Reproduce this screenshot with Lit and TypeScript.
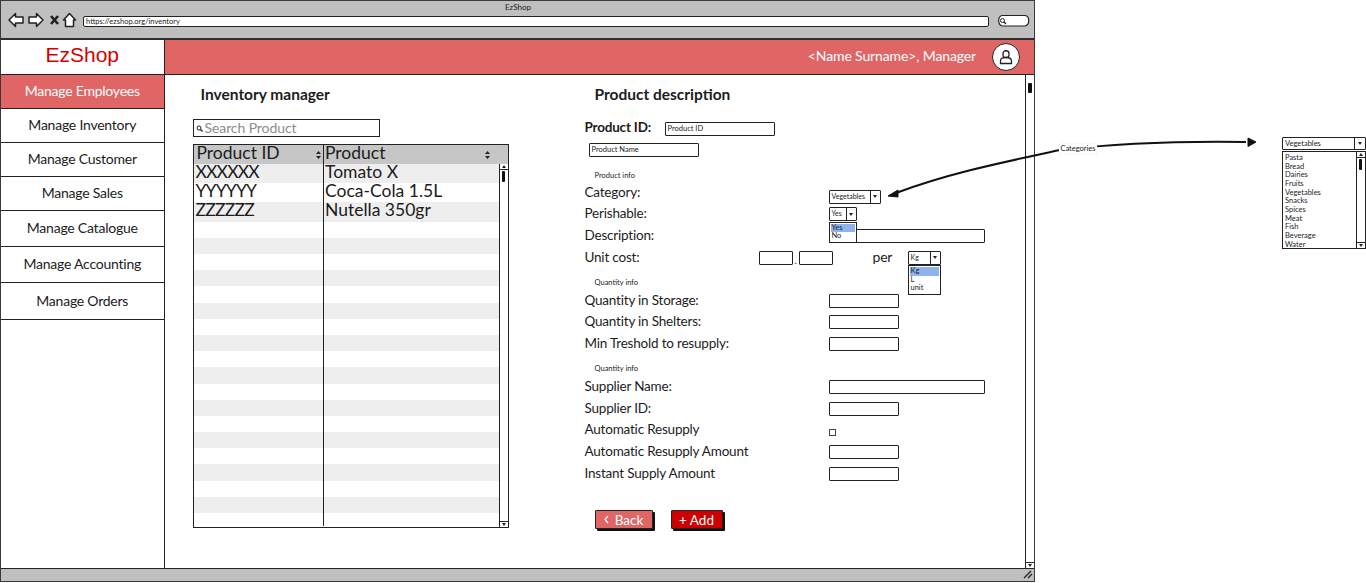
import { LitElement, html, css, svg } from 'lit';
import { customElement } from 'lit/decorators.js';

const NAV = [
  { label: 'Manage Employees', h: 34, active: true },
  { label: 'Manage Inventory', h: 34 },
  { label: 'Manage Customer', h: 34 },
  { label: 'Manage Sales', h: 34 },
  { label: 'Manage Catalogue', h: 36 },
  { label: 'Manage Accounting', h: 36 },
  { label: 'Manage Orders', h: 37 },
];

const PRODUCTS = [
  ['XXXXXX', 'Tomato X'],
  ['YYYYYY', 'Coca-Cola 1.5L'],
  ['ZZZZZZ', 'Nutella 350gr'],
];

const EMPTY_ROWS = 19;

const CATEGORIES = ['Pasta', 'Bread', 'Dairies', 'Fruits', 'Vegetables', 'Snacks', 'Spices', 'Meat', 'Fish', 'Beverage', 'Water'];

const sortIcon = svg`<svg class="sort" width="5" height="8" viewBox="0 0 5 8"><path d="M2.5 0 5 3H0zM2.5 8 0 5h5z" fill="#222"/></svg>`;

@customElement('app-root')
export class AppRoot extends LitElement {
  static styles = css`
    :host {
      display: block;
      position: relative;
      width: 1366px;
      height: 583px;
      overflow: hidden;
      background: #fff;
      color: #1c1c1c;
      font-family: Lato, 'Open Sans', sans-serif;
    }
    .window {
      width: 1035px;
      height: 582px;
      box-sizing: border-box;
      border: 1.5px solid #3a3a3a;
      display: flex;
      flex-direction: column;
    }
    .chrome {
      height: 39px;
      flex: none;
      background: #bfbfbf;
      border-bottom: 2px solid #2e2e2e;
      box-sizing: border-box;
    }
    .win-title {
      text-align: center;
      font-size: 8px;
      line-height: 10px;
      padding-top: 1px;
      padding-left: 1px;
    }
    .toolbar {
      display: flex;
      align-items: center;
      height: 18px;
      padding-left: 7px;
    }
    .toolbar svg { flex: none; display: block; }
    .toolbar .nav-icons { margin-top: -3px; }
    .url {
      width: 902px;
      height: 9px;
      margin-left: 5px;
      margin-right: 8px;
      background: #fff;
      border: 1.5px solid #222;
      border-radius: 2px;
      font-size: 7.5px;
      line-height: 9px;
      padding-left: 2px;
    }
    .shell { flex: 1; display: flex; min-height: 0; }
    .sidebar {
      width: 162.5px;
      flex: none;
      border-right: 1.5px solid #222;
    }
    .logo {
      height: 34.5px;
      box-sizing: border-box;
      border-bottom: 1.5px solid #222;
      text-align: center;
      color: #d60000;
      font-family: 'Liberation Sans', sans-serif;
      font-size: 21px;
      line-height: 29px;
    }
    .nav-item {
      box-sizing: border-box;
      border-bottom: 1.5px solid #222;
      display: flex;
      align-items: center;
      justify-content: center;
      padding-bottom: 1px;
      font-size: 14px;
      letter-spacing: -0.23px;
    }
    .nav-item.active { background: #e06666; color: #fff; }
    .main { flex: 1; display: flex; flex-direction: column; min-width: 0; }
    .header {
      height: 34.5px;
      flex: none;
      box-sizing: border-box;
      background: #e06666;
      border-bottom: 1.5px solid #222;
      color: #fff;
      display: flex;
      align-items: center;
      justify-content: flex-end;
      padding-right: 14px;
      font-size: 14px;
      letter-spacing: -0.13px;
    }
    .header span { margin-top: -2px; }
    .avatar {
      width: 26px;
      height: 26px;
      margin-left: 16px;
      border-radius: 50%;
      background: #fff;
      border: 1.5px solid #222;
      display: flex;
      align-items: center;
      justify-content: center;
    }
    .content { flex: 1; display: flex; min-height: 0; }
    .list-col { flex: none; padding: 9.5px 0 0 28px; box-sizing: border-box; width: 420px; }
    h2 {
      margin: 0;
      font-size: 15.5px;
      line-height: 20px;
      font-weight: 700;
    }
    .list-col h2 { margin-left: 8px; }
    .search {
      width: 187px;
      height: 18px;
      margin-top: 15px;
      box-sizing: border-box;
      border: 1.5px solid #222;
      color: #8c8c8c;
      font-size: 14px;
      line-height: 14px;
      display: flex;
      align-items: center;
      gap: 2px;
      padding-left: 2px;
      letter-spacing: -0.09px;
    }
    .table {
      width: 316px;
      height: 384px;
      margin-top: 6.5px;
      box-sizing: border-box;
      border: 1.5px solid #222;
      position: relative;
    }
    .thead {
      display: flex;
      height: 19px;
      background: #c6c6c6;
      font-size: 17.5px;
      line-height: 15px;
    }
    .thead > div, .tr > div { box-sizing: border-box; }
    .c1 { width: 129.5px; flex: none; padding-left: 3px; position: relative; }
    .c2 { flex: 1; border-left: 1.5px solid #222; padding-left: 1px; position: relative; }
    .sort { position: absolute; top: 6px; right: 2px; }
    .c2 .sort { right: 18px; }
    .tbody { display: flex; flex-direction: column; height: 362px; }
    .tr {
      display: flex;
      flex: none;
      height: 19.4px;
      font-size: 17.5px;
      line-height: 16px;
      margin-right: 9px;
    }
    .tr.empty { height: 16.2px; }
    .tr.empty:last-child { flex: 1; height: auto; }
    .tr:nth-child(odd) { background: #eee; }
    .tr .c1 { padding-left: 2px; letter-spacing: -0.8px; }
    .vbar {
      position: absolute;
      right: 0;
      top: 19px;
      bottom: 0;
      width: 9px;
      background: #fff;
      border-left: 1px solid #222;
      box-sizing: border-box;
    }
    .thumb {
      position: absolute;
      left: 2px;
      top: 7px;
      width: 3px;
      height: 11px;
      background: #111;
      border-radius: 1px;
    }
    .arr-up, .arr-down {
      position: absolute;
      left: 0;
      width: 100%;
      height: 6px;
      box-sizing: border-box;
      display: flex;
      align-items: center;
      justify-content: center;
    }
    .arr-up { top: 0; border-bottom: 1px solid #222; }
    .arr-down { bottom: 0; border-top: 1px solid #222; }
    .arr-up::after { content: ''; border: 2px solid transparent; border-top: 0; border-bottom: 3px solid #222; }
    .arr-down::after { content: ''; border: 2px solid transparent; border-bottom: 0; border-top: 3px solid #222; }
    .form-col { flex: 1; padding-top: 9.5px; min-width: 0; }
    .form-col h2 { margin-left: 10px; }
    .id-row {
      display: flex;
      align-items: center;
      margin-top: 17px;
      font-size: 13.5px;
      font-weight: 700;
      letter-spacing: -0.2px;
      height: 15px;
    }
    .id-row .id-label { width: 80px; flex: none; margin-top: -3px; }
    .id-row .input { width: 110px; letter-spacing: 0; }
    .input {
      box-sizing: border-box;
      height: 14px;
      border: 1.5px solid #222;
      border-radius: 1px;
      font-size: 7.5px;
      font-weight: 400;
      line-height: 11px;
      padding-left: 2px;
      background: #fff;
      flex: none;
    }
    .name-input { width: 110px; margin: 7px 0 0 4px; }
    .section {
      font-size: 7.5px;
      margin-left: 10px;
      box-sizing: border-box;
      display: flex;
      align-items: center;
    }
    .sec1 { height: 24px; padding-top: 12px; }
    .sec2 { height: 21.4px; padding-top: 9px; }
    .sec3 { height: 21.9px; padding-top: 8px; }
    .row {
      display: flex;
      align-items: center;
      height: 21.6px;
      font-size: 13.5px;
      letter-spacing: -0.2px;
    }
    .row .label { width: 244px; flex: none; }
    .row .short { width: 174px; }
    .qty { width: 70px; margin-top: 2px; }
    .wide { width: 156px; margin-top: 2px; }
    .check {
      width: 7px;
      height: 7px;
      margin-top: 7px;
      border: 1px solid #444;
      box-sizing: border-box;
      flex: none;
    }
    .select {
      display: flex;
      height: 14px;
      box-sizing: border-box;
      border: 1.5px solid #222;
      border-radius: 1px;
      background: #fff;
      font-size: 7px;
      letter-spacing: 0;
      line-height: 11px;
      flex: none;
    }
    .select .value { flex: 1; padding-left: 2px; white-space: nowrap; overflow: hidden; }
    .select .btn {
      width: 9px;
      flex: none;
      border-left: 1px solid #222;
      display: flex;
      align-items: center;
      justify-content: center;
    }
    .select .btn::after { content: ''; border: 2.5px solid transparent; border-bottom: 0; border-top: 3px solid #222; }
    .sel-cat { width: 52px; margin-top: 10px; }
    .sel-yes { width: 28px; }
    .sel-kg { width: 33px; }
    .cost { width: 34px; height: 14px; margin-top: 2px; }
    .dot { width: 6px; text-align: center; font-size: 10px; flex: none; margin-top: 6px; }
    .per { margin-left: 40px; width: 35px; flex: none; font-size: 14px; }
    .anchor { position: relative; flex: none; margin-top: 2px; }
    .popup {
      position: absolute;
      left: 0;
      top: 14.5px;
      box-sizing: border-box;
      background: #fff;
      border: 1.5px solid #222;
      font-size: 7.5px;
      letter-spacing: 0;
      line-height: 8.5px;
      padding: 1px;
      z-index: 2;
    }
    .popup div { padding-left: 1px; }
    .popup .sel { background: #8fb4ec; }
    .pop-yes { width: 28px; }
    .pop-kg { width: 33px; }
    .actions { display: flex; margin: 27px 0 0 10px; gap: 18px; }
    .action {
      height: 19px;
      box-sizing: border-box;
      border: 1px solid #222;
      border-radius: 1px;
      box-shadow: 2px 2px 0 #111;
      color: #fff;
      font-size: 13.5px;
      display: flex;
      align-items: center;
      justify-content: center;
      gap: 6px;
    }
    .back { width: 58px; background: #e06666; }
    .add { width: 52px; background: #cc0000; }
    .page-bar {
      width: 9px;
      flex: none;
      border-left: 1.5px solid #222;
      box-sizing: border-box;
      position: relative;
    }
    .page-bar .thumb { left: 2px; top: 8px; height: 10px; width: 3.5px; }
    .footer {
      height: 13.5px;
      flex: none;
      background: #bfbfbf;
      border-top: 1.5px solid #222;
      box-sizing: border-box;
      display: flex;
      justify-content: flex-end;
      align-items: center;
      padding-right: 1px;
    }
    .overlay { position: absolute; inset: 0; width: 1366px; height: 583px; pointer-events: none; }
    .overlay svg { position: absolute; left: 0; top: 0; }
    .arrow-label {
      position: absolute;
      left: 1059px;
      top: 144px;
      width: 38px;
      height: 10px;
      background: #fff;
      border-radius: 2px;
      box-shadow: 0 0 1px #bbb;
      font-size: 7.5px;
      line-height: 10px;
      text-align: center;
    }
    .combo {
      position: absolute;
      left: 1282px;
      top: 137px;
      width: 84px;
      font-size: 7.5px;
    }
    .combo .select { height: 13px; width: 84px; font-size: 7.5px; }
    .combo .select .btn { width: 10px; }
    .combo-list {
      position: relative;
      margin-top: 1px;
      height: 98px;
      box-sizing: border-box;
      border: 1.5px solid #222;
      padding: 2px 0 0 2px;
      line-height: 8.65px;
    }
    .combo-list .vbar { top: 0; }
  `;

  private renderRows() {
    const empty = Array.from({ length: EMPTY_ROWS });
    return html`
      ${PRODUCTS.map(([id, name]) => html`<div class="tr"><div class="c1">${id}</div><div class="c2">${name}</div></div>`)}
      ${empty.map(() => html`<div class="tr empty"><div class="c1"></div><div class="c2"></div></div>`)}
    `;
  }

  private qtyRow(label: string, box = 'qty') {
    return html`<div class="row"><div class="label">${label}</div><div class="input ${box}"></div></div>`;
  }

  render() {
    return html`
      <div class="window">
        <div class="chrome">
          <div class="win-title">EzShop</div>
          <div class="toolbar">
            <svg class="nav-icons" width="70" height="16" viewBox="0 0 70 16" fill="#fff" stroke="#222" stroke-width="1.5" stroke-linejoin="round">
              <path d="M1 8 7.5 1.500V5H15V11H7.500V14.500Z"/>
              <path d="M35 8 28.5 1.500V5H21V11H28.500V14.500Z"/>
              <path d="M43 4 50 12M50 4 43 12" fill="none" stroke-width="2.6"/>
              <path d="M55.5 8 61.5 1.500 67.5 8H65.500V14.500H57.500V8Z"/>
            </svg>
            <div class="url">https://ezshop.org/inventory</div>
            <svg width="34" height="14" viewBox="0 0 34 14">
              <path d="M5 1.5H28C33 2 33 11 28 12H6C1 12 0 3 5 1.5Z" fill="#fff" stroke="#222" stroke-width="1.2"/>
              <circle cx="5.5" cy="6.5" r="2" fill="none" stroke="#222" stroke-width="1"/>
              <path d="M7 8 9 10" stroke="#222" stroke-width="1.2"/>
            </svg>
          </div>
        </div>
        <div class="shell">
          <nav class="sidebar">
            <div class="logo">EzShop</div>
            ${NAV.map(n => html`<div class="nav-item ${n.active ? 'active' : ''}" style="height:${n.h}px">${n.label}</div>`)}
          </nav>
          <div class="main">
            <div class="header">
              <span>&lt;Name Surname&gt;, Manager</span>
              <div class="avatar">
                <svg width="14" height="16" viewBox="0 0 14 16" fill="none" stroke="#222" stroke-width="1.3">
                  <path d="M4 6V4.5C4 .8 10 .8 10 4.5V6C10 8 9 8.5 7 8.5S4 8 4 6Z"/>
                  <path d="M7 8.5C3 8.5 1.5 9.5 1.5 12V14.5H12.5V12C12.5 9.5 11 8.5 7 8.5Z"/>
                </svg>
              </div>
            </div>
            <div class="content">
              <section class="list-col">
                <h2>Inventory manager</h2>
                <div class="search">
                  <svg width="7" height="7" viewBox="0 0 7 7" fill="none" stroke="#222"><circle cx="3" cy="3" r="2"/><path d="M4.5 4.5 6.5 6.5" stroke-width="1.4"/></svg>
                  Search Product
                </div>
                <div class="table">
                  <div class="thead">
                    <div class="c1">Product ID${sortIcon}</div>
                    <div class="c2">Product${sortIcon}</div>
                  </div>
                  <div class="tbody">${this.renderRows()}</div>
                  <div class="vbar"><div class="arr-up"></div><div class="thumb"></div><div class="arr-down"></div></div>
                </div>
              </section>
              <section class="form-col">
                <h2>Product description</h2>
                <div class="id-row"><div class="id-label">Product ID:</div><div class="input">Product ID</div></div>
                <div class="input name-input">Product Name</div>
                <div class="section sec1">Product info</div>
                <div class="row"><div class="label">Category:</div><div class="select sel-cat"><div class="value">Vegetables</div><div class="btn"></div></div></div>
                <div class="row">
                  <div class="label">Perishable:</div>
                  <div class="anchor">
                    <div class="select sel-yes"><div class="value">Yes</div><div class="btn"></div></div>
                    <div class="popup pop-yes"><div class="sel">Yes</div><div>No</div></div>
                  </div>
                </div>
                ${this.qtyRow('Description:', 'wide')}
                <div class="row">
                  <div class="label short">Unit cost:</div>
                  <div class="input cost"></div><div class="dot">.</div><div class="input cost"></div>
                  <div class="per">per</div>
                  <div class="anchor">
                    <div class="select sel-kg"><div class="value">Kg</div><div class="btn"></div></div>
                    <div class="popup pop-kg"><div class="sel">Kg</div><div>L</div><div>unit</div></div>
                  </div>
                </div>
                <div class="section sec2">Quantity info</div>
                ${this.qtyRow('Quantity in Storage:')}
                ${this.qtyRow('Quantity in Shelters:')}
                ${this.qtyRow('Min Treshold to resupply:')}
                <div class="section sec3">Quantity info</div>
                ${this.qtyRow('Supplier Name:', 'wide')}
                ${this.qtyRow('Supplier ID:')}
                <div class="row"><div class="label">Automatic Resupply</div><div class="check"></div></div>
                ${this.qtyRow('Automatic Resupply Amount')}
                ${this.qtyRow('Instant Supply Amount')}
                <div class="actions">
                  <div class="action back">
                    <svg width="5" height="9" viewBox="0 0 5 9" fill="none" stroke="#fff" stroke-width="1.2"><path d="M4 1 1 4.500 4 8"/></svg>
                    Back
                  </div>
                  <div class="action add">+ Add</div>
                </div>
              </section>
              <div class="page-bar"><div class="thumb"></div><div class="arr-down"></div></div>
            </div>
          </div>
        </div>
        <div class="footer">
          <svg width="10" height="9" viewBox="0 0 10 9" stroke="#222" stroke-width="1.3"><path d="M1 8 8 1M5 8 9 4"/></svg>
        </div>
      </div>
      <div class="overlay">
        <svg width="1366" height="583" viewBox="0 0 1366 583">
          <path d="M896 193C950 173 1000 163 1060 150C1120 143 1180 141 1246 142" fill="none" stroke="#111" stroke-width="2"/>
          <path d="M888 196 898 190 898 197Z" fill="#111" stroke="#111"/>
          <path d="M1256 142 1248 138 1248 146.500Z" fill="#111" stroke="#111"/>
        </svg>
        <div class="arrow-label">Categories</div>
        <div class="combo">
          <div class="select"><div class="value">Vegetables</div><div class="btn"></div></div>
          <div class="combo-list">
            ${CATEGORIES.map(c => html`<div>${c}</div>`)}
            <div class="vbar"><div class="arr-up"></div><div class="thumb"></div><div class="arr-down"></div></div>
          </div>
        </div>
      </div>
    `;
  }
}
